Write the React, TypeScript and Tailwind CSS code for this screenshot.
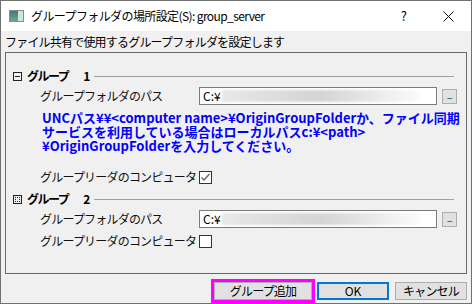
import React from "react";

const FONT = "font-['Noto_Sans_CJK_JP',sans-serif]";

function GroupHeader({ num, expanded }: { num: string; expanded: boolean }) {
  return (
    <div className="h-[16px] flex items-center">
      {expanded ? (
        <svg width="9" height="9" viewBox="0 0 9 9" className="shrink-0">
          <rect x="0.5" y="0.5" width="8" height="8" fill="none" stroke="#222" />
          <line x1="2" y1="4.5" x2="7" y2="4.5" stroke="#222" />
        </svg>
      ) : (
        <svg width="9" height="9" viewBox="0 0 9 9" className="shrink-0">
          <rect x="0.5" y="0.5" width="8" height="8" fill="none" stroke="#222" />
          <path d="M2 2.5h5M2 4.5h1M6 4.5h1M2 6.5h5" stroke="#222" strokeDasharray="1 1" />
        </svg>
      )}
      <span className="ml-[5px] text-[12px] font-bold text-black leading-none tracking-[-1.5px] whitespace-nowrap">
        グループ
      </span>
      <span className="ml-[15px] text-[12px] font-bold text-black leading-none whitespace-nowrap">
        {num}
      </span>
      <div className="flex-1 ml-[4px] mr-[12px] h-px bg-[#a0a0a0]" />
    </div>
  );
}

function PathRow() {
  return (
    <div className="h-[18px] flex items-center ml-[27px]">
      <span className="w-[159px] text-[12px] text-[#111] tracking-[-0.8px] whitespace-nowrap">
        グループフォルダのパス
      </span>
      <div className="w-[238px] h-[18px] border border-[#7a7a7a] bg-white flex items-center pl-[3px] overflow-hidden">
        <span className="text-[12px] text-black leading-none whitespace-nowrap">C:¥</span>
        <div className="ml-[1px] w-[198px] h-[12px] bg-linear-to-r from-[#e8e8e8] via-[#d4d4d4] to-[#fcfcfc] blur-[1px]" />
      </div>
      <button className="ml-[5px] w-[15px] h-[15px] border border-[#adadad] bg-[#e1e1e1] flex items-end justify-center pb-[3px]">
        <span className="text-[8px] leading-none text-black tracking-[-0.5px]">...</span>
      </button>
    </div>
  );
}

function LeaderRow({ checked }: { checked: boolean }) {
  return (
    <div className="h-[14px] flex items-center ml-[27px]">
      <span className="w-[159px] text-[12px] text-[#111] tracking-[-0.8px] whitespace-nowrap">
        グループリーダのコンピュータ
      </span>
      <div className="w-[13px] h-[13px] border border-[#333] bg-white flex items-center justify-center">
        {checked && (
          <svg width="11" height="11" viewBox="0 0 11 11">
            <path d="M1.5 5.5l2.5 2.5 5.5-6" fill="none" stroke="#666" strokeWidth="1.3" />
          </svg>
        )}
      </div>
    </div>
  );
}

export default function App() {
  return (
    <div className={`w-[472px] h-[304px] border border-[#707070] bg-[#f0f0f0] flex flex-col overflow-hidden ${FONT}`}>
      {/* title bar */}
      <div className="h-[30px] bg-white flex items-center shrink-0">
        <div className="ml-[8px] w-[15px] h-[12px] border border-[#8a8a8a] flex">
          <div className="w-[8px] h-full bg-linear-to-b from-[#3d7d7a] to-[#6fa39a]" />
          <div className="flex-1 h-full bg-[#cfe3e0]" />
        </div>
        <span className="ml-[7px] text-[12px] text-black tracking-[-0.6px] whitespace-nowrap">
          グループフォルダの場所設定(S): group_server
        </span>
        <div className="flex-1" />
        <span className="text-[13px] text-black mr-[36px]">?</span>
        <svg width="11" height="11" viewBox="0 0 11 11" className="mr-[17px]">
          <path d="M0.5 0.5l10 10M10.5 0.5l-10 10" stroke="#111" strokeWidth="1" />
        </svg>
      </div>

      <div className="h-[21px] shrink-0 pl-[4px] leading-[21px] text-[12px] text-black tracking-[-0.8px] whitespace-nowrap">
        ファイル共有で使用するグループフォルダを設定します
      </div>

      {/* group panel */}
      <div className="mx-[4px] h-[222px] border border-[#696969] flex flex-col pl-[7px] shrink-0">
        <div className="mt-[15px]">
          <GroupHeader num="1" expanded />
        </div>
        <div className="mt-[3px]">
          <PathRow />
        </div>
        <div className="mt-[6px] ml-[29px] flex flex-col text-[13px] font-bold leading-[14px] text-[#0000ff] whitespace-nowrap">
          <span className="h-[14px]">UNCパス¥¥&lt;computer name&gt;¥OriginGroupFolderか、ファイル同期</span>
          <span className="h-[14px]">サービスを利用している場合はローカルパスc:¥&lt;path&gt;</span>
          <span className="h-[14px]">¥OriginGroupFolderを入力してください。</span>
        </div>
        <div className="mt-[17px]">
          <LeaderRow checked />
        </div>
        <div className="mt-[7px]">
          <GroupHeader num="2" expanded={false} />
        </div>
        <div className="mt-[3px]">
          <PathRow />
        </div>
        <div className="mt-[6px]">
          <LeaderRow checked={false} />
        </div>
      </div>

      {/* buttons */}
      <div className="mt-[5px] mr-[4px] shrink-0 flex items-center justify-end">
        <div className="flex border-[3px] border-[#ff00ff]">
          <button className="w-[98px] h-[18px] border border-[#adadad] bg-[#e1e1e1] text-[12px] leading-none text-black tracking-[-0.8px]">
            グループ追加
          </button>
        </div>
        <button className="ml-[2px] w-[72px] h-[18px] border-2 border-[#0078d7] bg-[#e1e1e1] text-[12px] leading-none text-black">
          OK
        </button>
        <button className="ml-[6px] w-[72px] h-[18px] border border-[#adadad] bg-[#e1e1e1] text-[12px] leading-none text-black tracking-[-0.8px]">
          キャンセル
        </button>
      </div>
    </div>
  );
}
